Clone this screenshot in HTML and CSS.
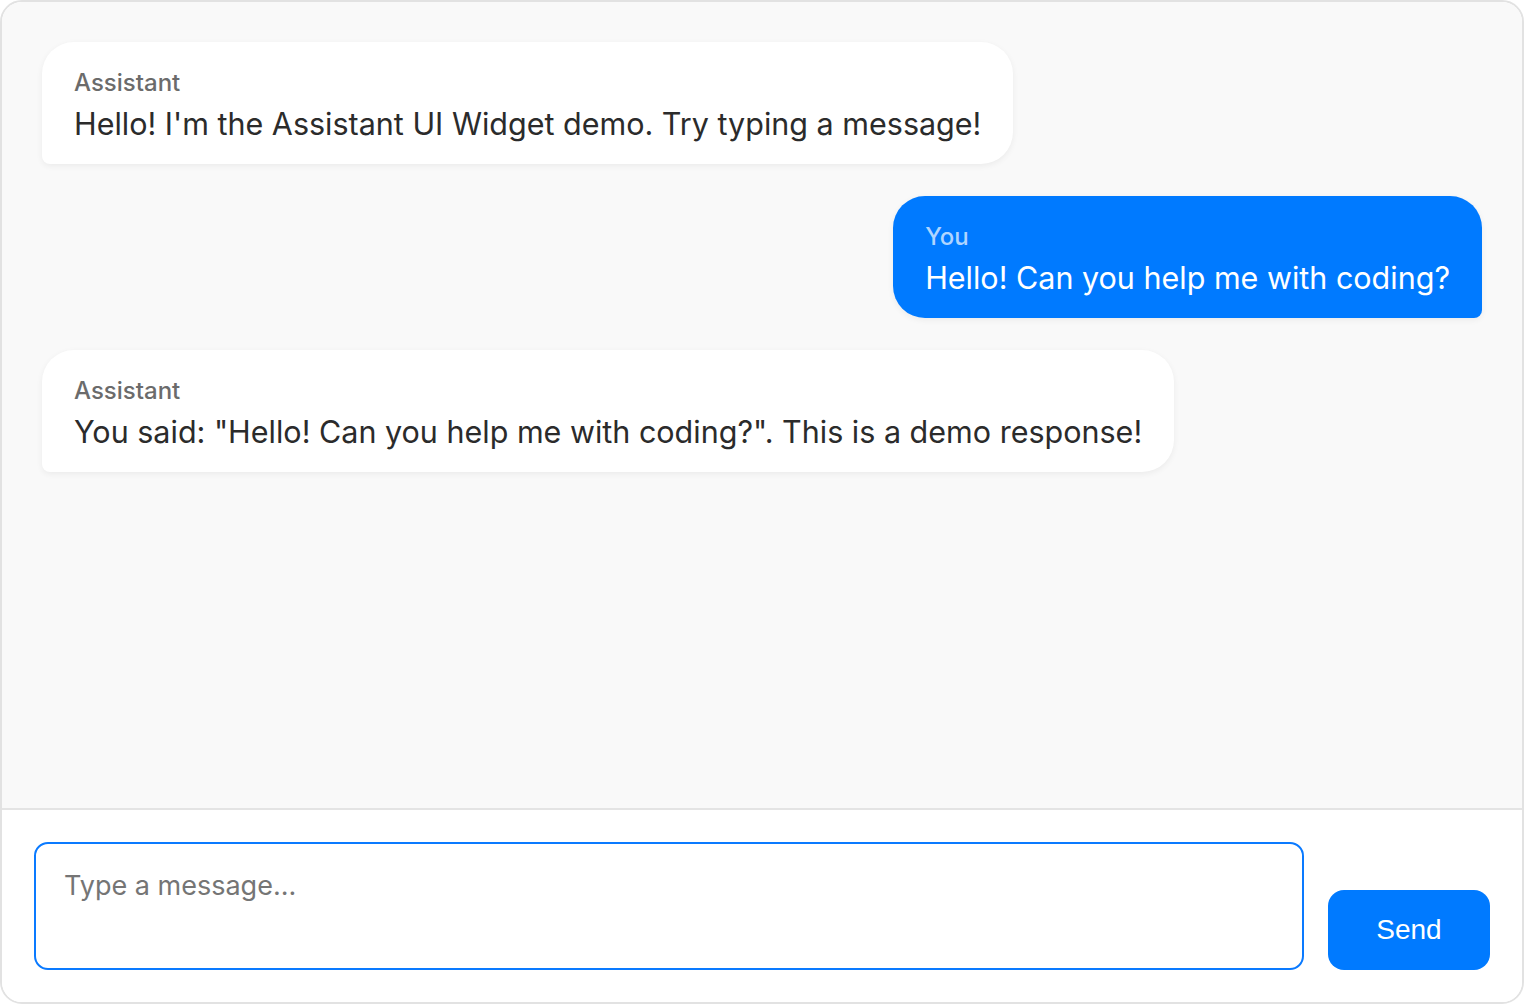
FILE: index.html
```html
<!DOCTYPE html>
<html lang="en">
<head>
<meta charset="utf-8">
<title>Assistant UI Widget</title>
<link rel="stylesheet" href="styles.css">
</head>
<body>
<div class="widget">
  <div class="messages">
    <div class="bubble assistant">
      <div class="label">Assistant</div>
      <div class="text">Hello! I'm the Assistant UI Widget demo. Try typing a message!</div>
    </div>
    <div class="bubble user">
      <div class="label">You</div>
      <div class="text">Hello! Can you help me with coding?</div>
    </div>
    <div class="bubble assistant">
      <div class="label">Assistant</div>
      <div class="text">You said: "Hello! Can you help me with coding?". This is a demo response!</div>
    </div>
  </div>
  <div class="composer">
    <textarea class="input" placeholder="Type a message..." autofocus></textarea>
    <button class="send">Send</button>
  </div>
</div>
</body>
</html>
```
FILE: styles.css
```css
html, body {
  margin: 0;
  padding: 0;
  height: 100%;
  background: #ffffff;
}
.widget {
  box-sizing: border-box;
  height: 100vh;
  border: 2px solid #e2e2e2;
  border-radius: 22px;
  overflow: hidden;
  display: flex;
  flex-direction: column;
  font-family: "Inter", "Liberation Sans", sans-serif;
}
.messages {
  flex: 1;
  background: #f9f9f9;
  padding: 40px;
  display: flex;
  flex-direction: column;
  align-items: flex-start;
  gap: 32px;
}
.bubble {
  box-sizing: border-box;
  padding: 25px 32px 18px 32px;
  border-radius: 32px 32px 32px 8px;
  background: #ffffff;
  box-shadow: 0 2px 6px rgba(0, 0, 0, 0.06);
}
.bubble.user {
  align-self: flex-end;
  background: #007aff;
  border-radius: 32px 32px 8px 32px;
}
.label {
  font-size: 24px;
  line-height: 32px;
  color: #6b6b6b;
  font-weight: 500;
}
.text {
  font-size: 30.5px;
  line-height: 45px;
  color: #2b2b2b;
  margin-top: 2px;
}
.user .label {
  color: rgba(255, 255, 255, 0.7);
}
.user .text {
  color: #ffffff;
}
.composer {
  border-top: 2px solid #e4e4e4;
  background: #ffffff;
  padding: 32px;
  display: flex;
  align-items: flex-end;
  gap: 24px;
}
.input {
  flex: 1;
  box-sizing: border-box;
  height: 128px;
  border: 2px solid #0a7aff;
  border-radius: 14px;
  padding: 26px 28px 20px 28px;
  font-family: "Inter", "Liberation Sans", sans-serif;
  font-size: 27px;
  line-height: 32px;
  color: #333;
  caret-color: #000;
  resize: none;
  outline: none;
}
.input::placeholder {
  color: #757575;
}
.send {
  box-sizing: border-box;
  width: 162px;
  height: 80px;
  border: none;
  border-radius: 16px;
  background: #007aff;
  color: #ffffff;
  font-family: "Liberation Sans", Arial, sans-serif;
  font-size: 28px;
  cursor: pointer;
}
```
